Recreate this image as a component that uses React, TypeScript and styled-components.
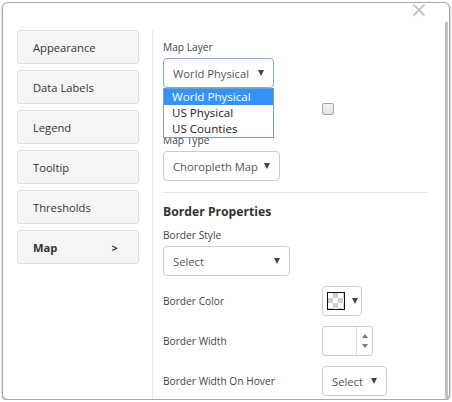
import React from "react";
import styled, { createGlobalStyle } from "styled-components";

const Global = createGlobalStyle`
  html, body { margin: 0; padding: 0; background: #fff; }
  body { font-family: "Open Sans", "Noto Sans", Arial, sans-serif; color: #333; }
  * { box-sizing: border-box; }
`;

const Modal = styled.div`
  position: relative;
  margin: 2px 0 0 2px;
  width: 448px;
  height: 398px;
  border: 1px solid #a9a9a9;
  border-radius: 6px;
  box-shadow: 0 1px 2px rgba(0, 0, 0, 0.45);
  background: #fff;
  overflow: hidden;
`;

const Close = styled.button`
  position: absolute;
  top: 0;
  right: 23px;
  width: 14px;
  height: 14px;
  padding: 0;
  border: 0;
  background: transparent;
  display: flex;
`;

const ScrollThumb = styled.div`
  position: absolute;
  top: 19px;
  right: 1px;
  width: 3px;
  height: 376px;
  background: #c1c1c1;
`;

const Body = styled.div`
  display: flex;
  align-items: flex-start;
  padding: 27px 0 0 14px;
  height: 100%;
`;

const Nav = styled.nav`
  width: 122px;
  display: flex;
  flex-direction: column;
  gap: 6px;
  flex-shrink: 0;
`;

const NavButton = styled.div<{ $active?: boolean }>`
  height: 34px;
  border: 1px solid #dedede;
  border-radius: 3px;
  background: #f5f5f5;
  padding: 0 20px 0 15px;
  display: flex;
  align-items: center;
  justify-content: space-between;
  font-size: 11.2px;
  font-weight: ${(p) => (p.$active ? 700 : 400)};
  color: #333;
`;

const Content = styled.div`
  margin-left: 13px;
  border-left: 1px solid #e6e6e6;
  padding: 9px 0 0 10px;
  height: 100%;
  width: 280px;
`;

const Label = styled.div<{ $mt?: number }>`
  font-size: 10.2px;
  line-height: 16px;
  color: #444;
  margin-top: ${(p) => p.$mt ?? 0}px;
  margin-bottom: 3px;
`;

const SelectBox = styled.div<{ $w: number; $focus?: boolean }>`
  position: relative;
  width: ${(p) => p.$w}px;
  height: 30px;
  border: 1px solid ${(p) => (p.$focus ? "#7fa9dc" : "#cccccc")};
  border-radius: 4px;
  background: #fff;
  display: flex;
  align-items: center;
  justify-content: space-between;
  padding: 0 9px 0 9px;
  font-size: 11.2px;
  color: #555;
`;

const Caret = styled.span`
  width: 0;
  height: 0;
  border-left: 3.5px solid transparent;
  border-right: 3.5px solid transparent;
  border-top: 6px solid #444;
`;

const UpCaret = styled.span`
  width: 0;
  height: 0;
  border-left: 3.5px solid transparent;
  border-right: 3.5px solid transparent;
  border-bottom: 4px solid #777;
`;

const DownCaret = styled.span`
  width: 0;
  height: 0;
  border-left: 3.5px solid transparent;
  border-right: 3.5px solid transparent;
  border-top: 4px solid #777;
`;

const DropList = styled.ul`
  position: absolute;
  top: 29px;
  left: -1px;
  width: 111px;
  margin: 0;
  padding: 0;
  list-style: none;
  border: 1px solid #7f9db9;
  background: #fff;
  z-index: 2;
`;

const DropItem = styled.li<{ $selected?: boolean }>`
  height: 16px;
  line-height: 16px;
  padding-left: 8px;
  font-size: 11.6px;
  color: ${(p) => (p.$selected ? "#fff" : "#222")};
  background: ${(p) => (p.$selected ? "#3492fb" : "transparent")};
`;

const CheckRow = styled.div`
  display: grid;
  grid-template-columns: 159px auto;
  align-items: center;
  height: 16px;
  margin-top: 13px;
`;

const Checkbox = styled.span`
  width: 12px;
  height: 12px;
  border: 1px solid #a3a3a3;
  border-radius: 2px;
  background: linear-gradient(#f4f4f4, #e4e4e4);
`;

const Rule = styled.div`
  width: 265px;
  height: 1px;
  background: #e6e6e6;
  margin-top: 11px;
`;

const Heading = styled.div`
  font-size: 12.2px;
  font-weight: 700;
  line-height: 18px;
  color: #333;
  margin-top: 10px;
  margin-bottom: 6px;
`;

const FieldRow = styled.div`
  display: grid;
  grid-template-columns: 159px auto;
  align-items: center;
  margin-top: 10px;
  font-size: 10.2px;
  color: #444;
`;

const ColorButton = styled.div`
  width: 40px;
  height: 30px;
  border: 1px solid #cccccc;
  border-radius: 4px;
  display: flex;
  align-items: center;
  padding-left: 4px;
  gap: 7px;
`;

const Swatch = styled.span`
  width: 18px;
  height: 18px;
  border: 1px solid #111;
  background-color: #fff;
  background-image: conic-gradient(#cfcfcf 25%, #fff 0 50%, #cfcfcf 0 75%, #fff 0);
  background-size: 10px 10px;
  background-position: 0 0;
`;

const Spinner = styled.div`
  width: 51px;
  height: 30px;
  border: 1px solid #cccccc;
  border-radius: 3px;
  display: flex;
`;

const SpinInput = styled.div`
  flex: 1;
  border-right: 1px solid #dddddd;
`;

const SpinArrows = styled.div`
  width: 15px;
  display: flex;
  flex-direction: column;
  align-items: center;
  justify-content: space-around;
  padding: 4px 0;
`;

const navItems = ["Appearance", "Data Labels", "Legend", "Tooltip", "Thresholds"];

export default function App() {
  return (
    <>
      <Global />
      <Modal>
        <Close aria-label="close">
          <svg width="14" height="14" viewBox="0 0 14 14">
            <path d="M1.5 1.5 L12.5 12.5 M12.5 1.5 L1.5 12.5" stroke="#c4c4c4" strokeWidth="1.8" />
          </svg>
        </Close>
        <ScrollThumb />
        <Body>
          <Nav>
            {navItems.map((n) => (
              <NavButton key={n}>{n}</NavButton>
            ))}
            <NavButton $active>
              <span>Map</span>
              <span>&gt;</span>
            </NavButton>
          </Nav>
          <Content>
            <Label>Map Layer</Label>
            <SelectBox $w={111} $focus>
              <span>World Physical</span>
              <Caret />
              <DropList>
                <DropItem $selected>World Physical</DropItem>
                <DropItem>US Physical</DropItem>
                <DropItem>US Counties</DropItem>
              </DropList>
            </SelectBox>
            <CheckRow>
              <span />
              <Checkbox />
            </CheckRow>
            <Label $mt={15}>Map Type</Label>
            <SelectBox $w={117}>
              <span>Choropleth Map</span>
              <Caret />
            </SelectBox>
            <Rule />
            <Heading>Border Properties</Heading>
            <Label>Border Style</Label>
            <SelectBox $w={127}>
              <span>Select</span>
              <Caret />
            </SelectBox>
            <FieldRow>
              <span>Border Color</span>
              <ColorButton>
                <Swatch />
                <Caret />
              </ColorButton>
            </FieldRow>
            <FieldRow>
              <span>Border Width</span>
              <Spinner>
                <SpinInput />
                <SpinArrows>
                  <UpCaret />
                  <DownCaret />
                </SpinArrows>
              </Spinner>
            </FieldRow>
            <FieldRow>
              <span>Border Width On Hover</span>
              <SelectBox $w={65}>
                <span>Select</span>
                <Caret />
              </SelectBox>
            </FieldRow>
          </Content>
        </Body>
      </Modal>
    </>
  );
}
